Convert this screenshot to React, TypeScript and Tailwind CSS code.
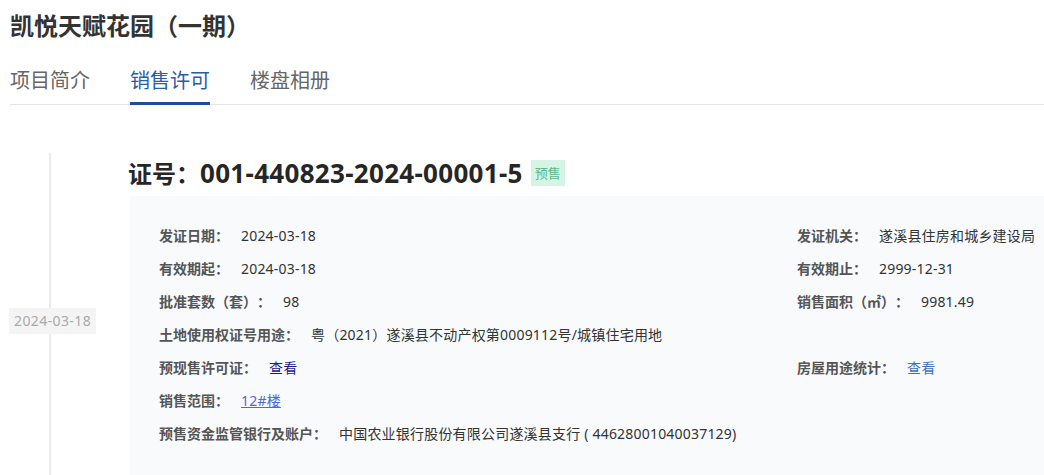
const rows: { label: string; value: React.ReactNode; rLabel?: string; rValue?: React.ReactNode }[] = [
  { label: '发证日期：', value: '2024-03-18', rLabel: '发证机关：', rValue: '遂溪县住房和城乡建设局' },
  { label: '有效期起：', value: '2024-03-18', rLabel: '有效期止：', rValue: '2999-12-31' },
  { label: '批准套数（套）：', value: '98', rLabel: '销售面积（㎡）：', rValue: '9981.49' },
  { label: '土地使用权证号用途：', value: '粤（2021）遂溪县不动产权第0009112号/城镇住宅用地' },
  {
    label: '预现售许可证：',
    value: <span className="text-[#1a1a8c]">查看</span>,
    rLabel: '房屋用途统计：',
    rValue: <span className="text-[#3f6fc2]">查看</span>,
  },
  { label: '销售范围：', value: <span className="text-[#4a6bd0] underline">12#楼</span> },
  { label: '预售资金监管银行及账户：', value: '中国农业银行股份有限公司遂溪县支行 ( 44628001040037129)' },
];

const Field = ({ label, value }: { label: string; value: React.ReactNode }) => (
  <div className="flex gap-[12px]">
    <span className="font-semibold text-[#555]">{label}</span>
    <span className="text-[#333] tracking-[0.2px]">{value}</span>
  </div>
);

const App = () => {
  return (
    <div className="w-[1044px] h-[475px] overflow-hidden bg-white font-['Noto_Sans','Noto_Sans_CJK_SC',sans-serif] [text-spacing-trim:space-all]">
      {/* Header */}
      <div className="pl-[10px]">
        <h1 className="pt-[10px] text-[24px] leading-[32px] font-bold text-[#333]">凯悦天赋花园（一期）</h1>
        <div className="mt-[25px] flex gap-[40px] border-b border-[#e6e6e6] text-[20px] leading-[28px]">
          <button className="pb-[7px] border-b-[3px] border-transparent -mb-px text-[#666]">项目简介</button>
          <button className="pb-[7px] border-b-[3px] border-[#1f4e9e] -mb-px text-[#2a5caa]">销售许可</button>
          <button className="pb-[7px] border-b-[3px] border-transparent -mb-px text-[#666]">楼盘相册</button>
        </div>
      </div>

      {/* Timeline */}
      <div className="mt-[48px] flex">
        <div className="relative w-[130px] shrink-0 pl-[9px] pt-[155px]">
          <div className="absolute left-[49px] top-0 bottom-0 w-[2px] bg-[#ebebeb]" />
          <span className="relative inline-block h-[26px] px-[5px] bg-[#f4f4f5] text-[14px] leading-[26px] tracking-[0.4px] text-[#aaa]">
            2024-03-18
          </span>
        </div>

        <div className="flex-1">
          <div className="mt-[4px] -ml-[2px] flex items-center gap-[8px]">
            <h2 className="h-[32px] leading-[32px] font-bold text-[#262626]">
              <span className="text-[24px]">证号：</span>
              <span className="text-[26px] tracking-[0.3px]">001-440823-2024-00001-5</span>
            </h2>
            <span className="h-[26px] px-[4px] bg-[#d6f4e4] text-[13px] leading-[26px] text-[#5cb88a]">预售</span>
          </div>

          <div className="mt-[7px] bg-[#f8fafc] pl-[29px] pt-[23px] pb-[40px] text-[14px] leading-[33px]">
            {rows.map((r, i) => (
              <div key={i} className="flex">
                <div className="flex-1">
                  <Field label={r.label} value={r.value} />
                </div>
                <div className="w-[247px]">{r.rLabel && <Field label={r.rLabel} value={r.rValue} />}</div>
              </div>
            ))}
          </div>
        </div>
      </div>
    </div>
  );
};

export default App;
